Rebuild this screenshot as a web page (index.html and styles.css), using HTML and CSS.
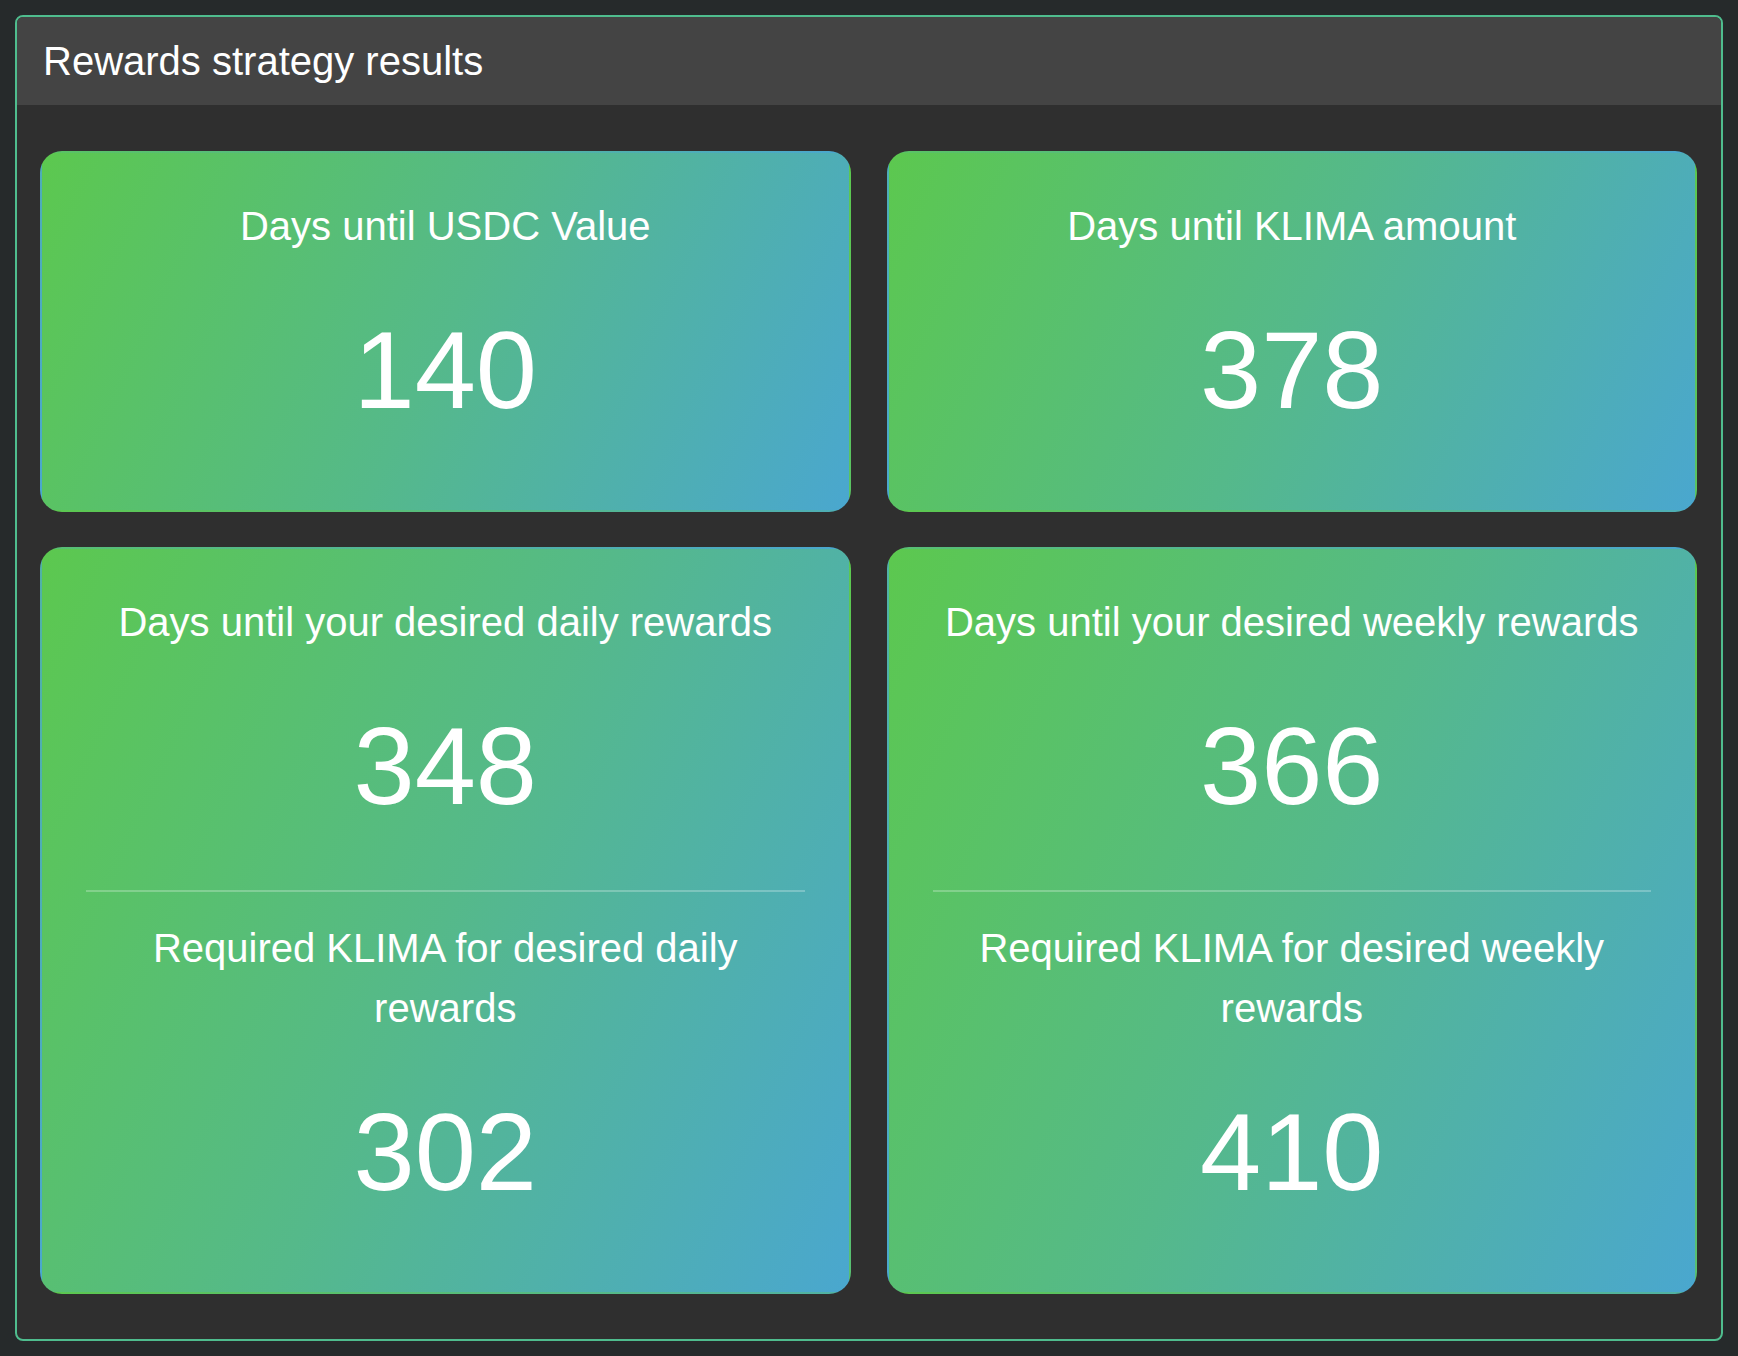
FILE: index.html
```html
<!DOCTYPE html>
<html lang="en">
<head>
<meta charset="utf-8">
<title>Rewards strategy results</title>
<link rel="stylesheet" href="styles.css">
</head>
<body>
<section class="panel">
  <header class="panel-header">Rewards strategy results</header>
  <div class="panel-body">
    <div class="card">
      <h3 class="card-title">Days until USDC Value</h3>
      <div class="card-value">140</div>
    </div>
    <div class="card">
      <h3 class="card-title">Days until KLIMA amount</h3>
      <div class="card-value">378</div>
    </div>
    <div class="card">
      <h3 class="card-title">Days until your desired daily rewards</h3>
      <div class="card-value">348</div>
      <hr class="divider">
      <h3 class="card-title">Required KLIMA for desired daily rewards</h3>
      <div class="card-value">302</div>
    </div>
    <div class="card">
      <h3 class="card-title">Days until your desired weekly rewards</h3>
      <div class="card-value">366</div>
      <hr class="divider">
      <h3 class="card-title">Required KLIMA for desired weekly rewards</h3>
      <div class="card-value">410</div>
    </div>
  </div>
</section>
</body>
</html>
```
FILE: styles.css
```css
html, body {
  background: #262a2b;
}
body {
  margin: 15px;
  font-family: "Liberation Sans", Arial, Helvetica, sans-serif;
  color: #ffffff;
}
.panel {
  border: 2px solid #4fbd8e;
  border-radius: 8px;
  background: #2f2f2f;
  overflow: hidden;
}
.panel-header {
  height: 88px;
  background: #444444;
  padding: 0 26px;
  font-size: 40px;
  line-height: 88px;
  color: #ffffff;
}
.panel-body {
  padding: 46px 24px 45px 23px;
  display: grid;
  grid-template-columns: 1fr 1fr;
  column-gap: 36px;
  row-gap: 35px;
}
.card {
  border: 2px solid transparent;
  border-radius: 22px;
  background: linear-gradient(115deg, #5cc84f 0%, #55b98a 50%, #4aa7cf 100%);
  padding: 43px 44px 58px;
  text-align: center;
  color: #ffffff;
}
.card-title {
  margin: 0;
  font-size: 40px;
  line-height: 60px;
  font-weight: normal;
}
.card-value {
  margin-top: 31px;
  font-size: 110px;
  line-height: 165px;
  font-weight: normal;
}
.divider {
  height: 2px;
  border: 0;
  margin: 42px 0 26px;
  background: rgba(255, 255, 255, 0.25);
}
```
